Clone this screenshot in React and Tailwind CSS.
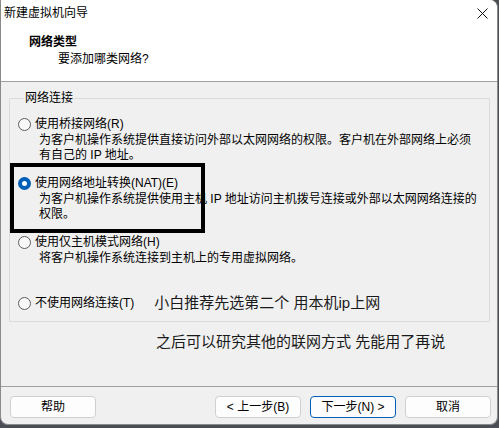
import React from "react";

const font = { fontFamily: '"Liberation Sans", "Noto Sans CJK SC", sans-serif' };

function Radio({ checked }) {
  return checked ? (
    <span className="w-[13px] h-[13px] rounded-full bg-[#005fb8] flex items-center justify-center shrink-0">
      <span className="w-[5px] h-[5px] rounded-full bg-white" />
    </span>
  ) : (
    <span className="w-[13px] h-[13px] rounded-full border border-[#5c5c5c] bg-[#f8f8f8] shrink-0" />
  );
}

function Option({ checked, label, lines, className = "", extra }) {
  return (
    <div className={className}>
      <div className="flex items-center h-[16px] leading-[16px]">
        <Radio checked={checked} />
        <span className="ml-[4px]">{label}</span>
        {extra}
      </div>
      {lines.length > 0 && (
        <p className="pl-[21px] pt-[1px] leading-[15px] whitespace-nowrap">
          {lines.map((l, i) => (
            <React.Fragment key={i}>
              {i > 0 && <br />}
              {l}
            </React.Fragment>
          ))}
        </p>
      )}
    </div>
  );
}

function Btn({ children, primary, className = "" }) {
  return (
    <button
      className={`w-[86px] h-[22px] rounded-[4px] bg-[#fdfdfd] text-[12px] leading-[20px] text-black border ${
        primary ? "border-[#005fb8]" : "border-[#d0d0d0]"
      } ${className}`}
    >
      {children}
    </button>
  );
}

export default function App() {
  return (
    <div className="w-[499px] h-[428px] bg-[#4b4f55] overflow-hidden" style={font}>
      <div className="relative w-[498px] h-[425px] bg-[#f0f0f0] border border-t-0 border-[#8a8a8a] rounded-tr-[8px] rounded-b-[8px] overflow-hidden text-[12px] text-black flex flex-col">
        {/* title + header */}
        <div className="bg-white h-[82px] border-b border-[#a0a0a0] shrink-0">
          <div className="h-[28px] flex items-center justify-between pl-[3px] pr-[9px]">
            <span className="leading-[16px] -mt-[2px]">新建虚拟机向导</span>
            <svg width="11" height="11" viewBox="0 0 11 11" className="-mt-[2px]">
              <path d="M0.5 0.5 L10.5 10.5 M10.5 0.5 L0.5 10.5" stroke="#111" strokeWidth="1" />
            </svg>
          </div>
          <div className="pl-[28px] mt-[6px] font-bold leading-[16px]">网络类型</div>
          <div className="pl-[57px] mt-[1px] leading-[16px]">要添加哪类网络?</div>
        </div>

        {/* body */}
        <div className="flex-1 flex flex-col">
          <fieldset className="ml-[8px] mt-[8px] w-[481px] border border-[#dcdcdc] px-[8px] pb-[10px] pt-0">
            <legend className="px-[1px] ml-[6px] leading-[16px]">网络连接</legend>
            <Option
              className="mt-[10px]"
              label="使用桥接网络(R)"
              lines={["为客户机操作系统提供直接访问外部以太网网络的权限。客户机在外部网络上必须", "有自己的 IP 地址。"]}
            />
            <Option
              className="mt-[12px]"
              checked
              label="使用网络地址转换(NAT)(E)"
              lines={["为客户机操作系统提供使用主机 IP 地址访问主机拨号连接或外部以太网网络连接的", "权限。"]}
            />
            <Option
              className="mt-[12px]"
              label="使用仅主机模式网络(H)"
              lines={["将客户机操作系统连接到主机上的专用虚拟网络。"]}
            />
            <Option
              className="mt-[29px]"
              label="不使用网络连接(T)"
              lines={[]}
              extra={
                <span className="ml-[20px] text-[15px] text-[#1a1a1a] whitespace-nowrap">
                  小白推荐先选第二个 用本机ip上网
                </span>
              }
            />
          </fieldset>
          <div className="pl-[155px] mt-[10px] text-[15px] leading-[20px] text-[#1a1a1a]">
            之后可以研究其他的联网方式 先能用了再说
          </div>
        </div>

        {/* footer */}
        <div className="h-[38px] border-t border-[#a0a0a0] shrink-0 flex items-start pt-[9px] pl-[9px]">
          <Btn>帮助</Btn>
          <Btn className="ml-[119px]">&lt; 上一步(B)</Btn>
          <Btn primary className="ml-[9px]">下一步(N) &gt;</Btn>
          <Btn className="ml-[9px]">取消</Btn>
        </div>

        {/* annotation box */}
        <div className="absolute left-[9px] top-[163px] w-[195px] h-[70px] border-[4px] border-black" />
      </div>
    </div>
  );
}
